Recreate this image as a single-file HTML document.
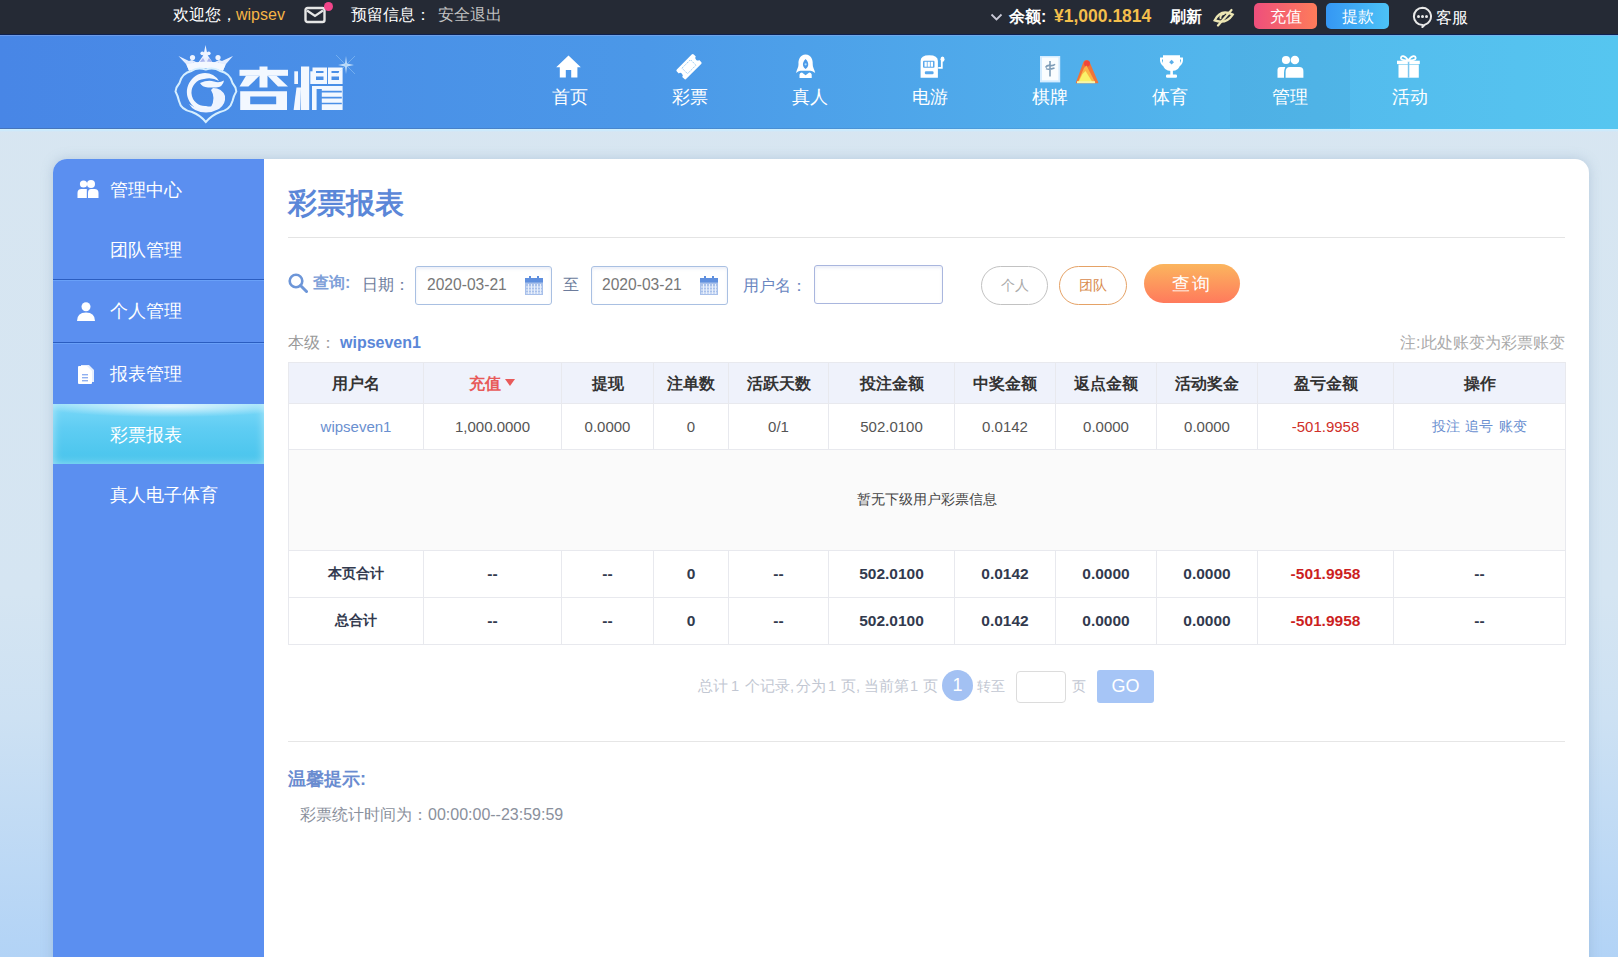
<!DOCTYPE html>
<html><head><meta charset="utf-8">
<style>
*{box-sizing:border-box;margin:0;padding:0}
html,body{width:1618px;height:957px;overflow:hidden}
body{font-family:"Liberation Sans",sans-serif;position:relative;background:linear-gradient(180deg,#d8e6f1 0%,#d5e5f2 62%,#cde1f3 75%,#b2d3f6 100%);color:#333}
.a{position:absolute;white-space:nowrap}
#top{position:absolute;left:0;top:0;width:1618px;height:34px;background:#252a35}
#nav{position:absolute;left:0;top:34px;width:1618px;height:95px;background:linear-gradient(90deg,rgba(70,110,170,.75) 0%,rgba(70,120,180,.45) 45%,rgba(90,180,230,.0) 85%) left bottom/100% 1px no-repeat,linear-gradient(90deg,#4886e6 0%,#4b98e8 40%,#52b6ec 75%,#56c6f0 100%);border-top:1px solid #0c2152}
#nav:before{content:"";position:absolute;left:0;top:0;width:100%;height:1px;background:rgba(140,170,230,.55)}
#nav:after{content:"";position:absolute;left:0;top:94px;width:100%;height:3px;background:linear-gradient(180deg,#cdf0fd,#cdeafc 50%,rgba(214,230,242,0))}
.t16{font-size:16px;line-height:20px}
.pg{top:678px;font-size:14.6px;line-height:17px;color:#c2c7d2}
.navi{position:absolute;top:0;width:120px;height:93px;color:#fff;text-align:center}
.navi svg{position:absolute;left:48px;top:20px;width:24px;height:24px}
.navi .tx{position:absolute;left:0;width:120px;top:51px;font-size:18px;line-height:22px}
#panel{position:absolute;left:53px;top:159px;width:1536px;height:820px;background:#fff;border-radius:14px;box-shadow:0 0 12px rgba(120,150,180,.35);overflow:hidden}
#side{position:absolute;left:0;top:0;width:211px;height:820px;background:#5b8ff0}
.si{position:absolute;left:0;width:211px;height:60px;color:#fff;font-size:18px;line-height:60px}
.si span{position:absolute;left:57px;top:1px}
.si svg{position:absolute}
.sep{position:absolute;left:0;width:211px;height:1px;background:#2b5dc0;box-shadow:0 1px 0 #69a0f8;z-index:1}
.inp{position:absolute;border:1px solid #a9c0e2;border-radius:3px;background:#fff;box-shadow:inset 0 2px 3px rgba(100,120,200,.12)}
table{position:absolute;left:288px;top:362px;border-collapse:collapse;table-layout:fixed;width:1277px}
td,th{border:1px solid #e8e9ee;text-align:center;font-size:15px;color:#555;white-space:nowrap}
th{height:41px;background:#eff2fb;font-size:16px;color:#333;font-weight:bold;padding-top:3px}
.dr td{height:46px}
.er td{height:101px;background:#fafafa;color:#444;font-size:14px}
.tr td{height:47px;font-size:15.5px;font-weight:bold;color:#323a4e}
</style></head>
<body>
<div id="top">
  <div class="a t16" style="left:173px;top:5px;color:#fff">欢迎您，</div><div class="a t16" style="left:236px;top:5px;color:#f6b545">wipsev</div>
  <svg class="a" style="left:304px;top:6px" width="24" height="18" viewBox="0 0 24 18"><rect x="1.5" y="2" width="19" height="14" rx="2" fill="none" stroke="#e6e6e6" stroke-width="2.4"/><path d="M3 4.5 L11 10 L19 4.5" fill="none" stroke="#e6e6e6" stroke-width="2.2"/></svg>
  <div class="a" style="left:324px;top:2px;width:9px;height:9px;border-radius:50%;background:#f2458a"></div>
  <div class="a t16" style="left:351px;top:5px;color:#fff">预留信息：</div>
  <div class="a t16" style="left:438px;top:5px;color:#c3c3c3">安全退出</div>

  <svg class="a" style="left:990px;top:13px" width="13" height="9" viewBox="0 0 13 9"><path d="M1.5 1.5 L6.5 6.5 L11.5 1.5" fill="none" stroke="#c9c9d6" stroke-width="1.8"/></svg>
  <div class="a t16" style="left:1009px;top:7px;color:#fff;font-weight:bold">余额:</div>
  <div class="a" style="left:1054px;top:6px;font-size:17.5px;line-height:20px;color:#f4bf4c;font-weight:bold">¥1,000.1814</div>
  <div class="a t16" style="left:1170px;top:7px;color:#fff;font-weight:bold">刷新</div>
  <svg class="a" style="left:1212px;top:7px" width="23" height="20" viewBox="0 0 23 20"><g transform="rotate(-18 11.5 10)"><path d="M2 10.5 Q11.5 1 21 10.5 Q11.5 18 2 10.5Z" fill="none" stroke="#ece6b4" stroke-width="2.3"/><path d="M8.3 11 A3.4 3.4 0 0 1 13.5 7.6" fill="none" stroke="#ece6b4" stroke-width="2"/></g><path d="M6 18.5 L19.5 3" stroke="#ece6b4" stroke-width="2.2" stroke-linecap="round"/></svg>
  <div class="a" style="left:1254px;top:3px;width:63px;height:26px;border-radius:5px;background:linear-gradient(90deg,#ee4f7c,#fe7c5a);color:#fff;font-size:16px;line-height:28px;text-align:center">充值</div>
  <div class="a" style="left:1326px;top:3px;width:63px;height:26px;border-radius:5px;background:linear-gradient(90deg,#3597f4,#4cc2f6);color:#fff;font-size:16px;line-height:28px;text-align:center">提款</div>
  <svg class="a" style="left:1412px;top:6px" width="21" height="22" viewBox="0 0 21 22"><path d="M10.5 1.8 A8.6 8.6 0 1 0 10.5 19 L10.5 21 L13 18.6 A8.6 8.6 0 0 0 10.5 1.8Z" fill="none" stroke="#e8e8e8" stroke-width="2"/><circle cx="6.5" cy="10.4" r="1.5" fill="#e8e8e8"/><circle cx="10.5" cy="10.4" r="1.5" fill="#e8e8e8"/><circle cx="14.5" cy="10.4" r="1.5" fill="#e8e8e8"/></svg>
  <div class="a t16" style="left:1436px;top:8px;color:#fff">客服</div>
</div>

<div id="nav">
  <!-- logo -->
  <svg class="a" style="left:165px;top:5px" width="190" height="88" viewBox="165 40 190 88">
    <defs><linearGradient id="cr" x1="0" y1="0" x2="0" y2="1"><stop offset="0" stop-color="#f4f8ff"/><stop offset="1" stop-color="#dde8ff"/></linearGradient></defs>
    <path d="M178.5 56 L186 64 L189 70.5 Q206 63 223 70.5 L226 64 L233 56 L222 61 L219 60 L213 63 L207.5 55 L205.5 45 L203.5 55 L198 63 L192 60 L189 61 Z" fill="url(#cr)"/>
    <path d="M193 62.5 L198 64.5 L203 58 L206 63 L209 58 L214 64.5 L219 62.5 L219 64.5 Q206 61 193 64.5Z" fill="#9fa9ea" opacity=".85"/>
    <path d="M186.5 64.5 Q206 58.5 225.5 64.5 L223 71 Q206 65 189 71Z" fill="#f4f8ff"/>
    <circle cx="192.5" cy="57.5" r="2.6" fill="#eef4ff"/><circle cx="218" cy="57.5" r="2.6" fill="#eef4ff"/><circle cx="205.5" cy="55" r="2.4" fill="#eef4ff"/><circle cx="202.3" cy="53.3" r="1.9" fill="#eef4ff"/><circle cx="208.7" cy="53.3" r="1.9" fill="#eef4ff"/>
    <path d="M205.8 69.5 Q214 67 220 71 Q230 73 232.5 83 Q236 87 236.3 91.5 Q233.5 96 232.5 101 Q230 110 220 112 Q212 115 205.8 122 Q200 115 192 112 Q181 110 179 101 Q178 96 175.5 91.5 Q176 87 179.5 83 Q182 73 191.5 71 Q197 67 205.8 69.5Z" fill="none" stroke="#d6efff" stroke-width="2"/>
    <path d="M205 73 A19 19 0 1 0 222 102 Q214 108 206 106 A13.5 13.5 0 0 1 204 79 Q212 77 219 81 Q214 73 205 73Z" fill="#f2f7ff"/>
    <path d="M200 83 Q208 79.5 214 81.5 Q219 83.5 224 80.5 Q223 87 216 87.5 L208 87.5 Q202 87 200 83Z" fill="#f2f7ff"/>
    <path d="M213 88 Q222 88 225 96 Q226 104 219 109 Q214 111 211 107 Q216 98 211 90Z" fill="#eef4ff"/>
    <path d="M189 104 Q198 110 206 108.5 Q214 110 222 104 Q218 112.5 206 112.5 Q194 112.5 189 104Z" fill="#eef4ff"/>
    <g fill="#f3f8ff">
    <rect x="239.5" y="69.8" width="48.5" height="6"/>
    <rect x="259.5" y="66.5" width="8" height="21"/>
    <path d="M246 75.8 L259.5 75.8 L248.4 86.5 L239.5 86.5Z"/>
    <path d="M267.6 75.8 L276.5 75.8 L288 86.5 L278 86.5Z"/>
    <path fill-rule="evenodd" d="M240.2 91.3 L287 91.3 L287 110 L240.2 110Z M250.2 96.5 L250.2 104.3 L276.2 104.3 L276.2 96.5Z"/>
    <rect x="301" y="66.5" width="8.2" height="43.5"/>
    <rect x="294.3" y="71.3" width="3.7" height="12.7"/>
    <rect x="310.3" y="71.3" width="3" height="12.7"/>
    <path d="M296.5 87.6 L301 87.6 L300.3 110 L293.6 110Z"/>
    <path fill-rule="evenodd" d="M312.5 67.6 L327 67.6 L327 84 L312.5 84Z M316 71 L316 73 L323.5 73 L323.5 71Z M316 76.5 L316 80 L323.5 80 L323.5 76.5Z"/>
    <path fill-rule="evenodd" d="M328 67.6 L342.6 67.6 L342.6 84 L328 84Z M331.5 71 L331.5 73 L339 73 L339 71Z M331.5 76.5 L331.5 80 L339 80 L339 76.5Z"/>
    <path fill-rule="evenodd" d="M312 86 L342.6 86 L342.6 110 L312 110Z M316.6 89 L316.6 110 L321.8 110 L321.8 89Z M321.8 90.8 L321.8 92.4 L341.8 92.4 L341.8 90.8Z M321.8 96.8 L321.8 98.4 L341.8 98.4 L341.8 96.8Z M321.8 102.7 L321.8 104.3 L341.8 104.3 L341.8 102.7Z"/>
    </g>
    <g opacity=".75"><path d="M346 56 L347 63.5 L354 65 L347 66.5 L346 74 L345 66.5 L338 65 L345 63.5Z" fill="#e6f6ff"/><path d="M336 55 L356 75 M356 55 L336 75" stroke="#bfe6ff" stroke-width=".8" opacity=".6"/></g>
  </svg>

  <div class="navi" style="left:510px">
    <div class="tx">首页</div></div>
  <div class="navi" style="left:630px">
    <div class="tx">彩票</div></div>
  <div class="navi" style="left:750px">
    <div class="tx">真人</div></div>
  <div class="navi" style="left:870px">
    <div class="tx">电游</div></div>
  <div class="navi" style="left:990px">
    <div class="tx">棋牌</div></div>
  <div class="navi" style="left:1110px">
    <div class="tx">体育</div></div>
  <div class="navi" style="left:1230px;background:rgba(20,60,120,.06)">
    <div class="tx">管理</div></div>
  <div class="navi" style="left:1350px">
    <div class="tx">活动</div></div>
</div>

<svg class="a" style="left:0;top:0;pointer-events:none" width="1618" height="130" viewBox="0 0 1618 130">
  <!-- home -->
  <path d="M568.5 55.5 L580.8 67.2 L577.4 67.2 L577.4 77.6 L571.2 77.6 L571.2 70 L565.8 70 L565.8 77.6 L559.8 77.6 L559.8 67.2 L556.2 67.2Z" fill="#fff"/>
  <!-- ticket -->
  <g transform="rotate(-45 689 66.7)"><path d="M677 61.5 Q677 60 678.5 60 L699.5 60 Q701 60 701 61.5 L701 64.3 Q699 64.3 699 66.7 Q699 69.1 701 69.1 L701 71.9 Q701 73.4 699.5 73.4 L678.5 73.4 Q677 73.4 677 71.9 L677 69.1 Q679 69.1 679 66.7 Q679 64.3 677 64.3Z" fill="#fff"/>
  <rect x="683" y="62.8" width="12" height="7.8" fill="none" stroke="#8ec4f0" stroke-width=".9" stroke-dasharray="1.5 1"/></g>
  <!-- zhenren -->
  <path d="M805.6 54.6 C800 54.6 798.2 60 798.5 64 C798.8 67 796.5 70 796 73 C798 71.5 799.5 71 800.5 70.8 L810.5 70.8 C811.5 71 813 71.5 815.2 73 C814.7 70 812.4 67 812.7 64 C813 60 811.2 54.6 805.6 54.6Z" fill="#fff"/>
  <path d="M805.6 59 C803.5 61 802.6 63.5 803 65.2 C803.4 67 804.4 68 805.6 69 C806.8 68 807.8 67 808.2 65.2 C808.6 63.5 807.7 61 805.6 59Z" fill="#4d9ae8"/>
  <circle cx="805.6" cy="64.3" r="1.1" fill="#a8dcff"/>
  <path d="M799.5 78 L799.5 74.5 Q800 72.6 802 72.5 L805.6 75.2 L809.2 72.5 Q811.2 72.6 811.7 74.5 L811.7 78Z" fill="#fff"/>
  <!-- slot -->
  <path d="M920.6 61 Q920.6 55.3 929.2 55.3 Q937.9 55.3 937.9 61 L937.9 77.7 L920.6 77.7Z" fill="#fff"/>
  <rect x="923" y="60.7" width="11.5" height="7.1" rx="1" fill="#5aa8ec"/>
  <rect x="924.5" y="61.8" width="2.3" height="4.9" fill="#fff"/><rect x="927.6" y="61.8" width="2.3" height="4.9" fill="#fff"/><rect x="930.7" y="61.8" width="2.3" height="4.9" fill="#fff"/>
  <rect x="924.8" y="71.3" width="8.8" height="3" rx="1.2" fill="#5aa8ec"/>
  <path d="M938.2 67.8 L941.8 67.8 L941.8 61" fill="none" stroke="#fff" stroke-width="1.8"/>
  <ellipse cx="942.5" cy="59.2" rx="2" ry="2.6" fill="#fff"/>
  <!-- mahjong -->
  <rect x="1040" y="56" width="20.2" height="26.4" fill="#d4ecff"/>
  <rect x="1042" y="57.5" width="16.4" height="22.8" fill="#fafdff"/>
  <path d="M1050 61 L1050 76.5 M1045.6 67.5 Q1047 65 1050 65.5 Q1053.5 66 1055 64.3 M1046 68.6 Q1049 70 1054.5 68" fill="none" stroke="#7f9db8" stroke-width="1.6"/>
  <!-- fire -->
  <path d="M1086.5 60 Q1089 60 1090 63 L1098.3 82.5 Q1098.5 83.2 1097.5 83.2 L1076.6 83.2 Q1075.8 83.2 1076 82.3 L1083 63 Q1084 60 1086.5 60Z" fill="#f07438"/>
  <circle cx="1087" cy="63.5" r="3" fill="#f2463a"/>
  <path d="M1086.5 65.5 L1095.5 83 L1077.5 83 L1084 68Z" fill="#fbb446"/>
  <path d="M1085.5 71 L1093 83 L1078 83 L1082.5 74Z" fill="#faf26a"/>
  <rect x="1077" y="81.2" width="18" height="2" fill="#f8f6a8"/>
  <!-- trophy -->
  <path d="M1163 55.3 L1180 55.3 L1180 63 Q1180 71 1171.5 71 Q1163 71 1163 63Z" fill="#fff"/>
  <path d="M1163.5 58.5 L1161 58.5 Q1160.5 63.5 1164.5 65.5 M1179.5 58.5 L1182 58.5 Q1182.5 63.5 1178.5 65.5" fill="none" stroke="#fff" stroke-width="2"/>
  <rect x="1170.3" y="70" width="2.6" height="5" fill="#fff"/>
  <rect x="1166" y="74.6" width="11" height="3.1" rx="1.2" fill="#fff"/>
  <path d="M1171.6 59.8 L1174 62.2 L1171.6 64.6 L1169.2 62.2Z" fill="#5aaeea"/>
  <!-- manage -->
  <circle cx="1286" cy="60" r="4.1" fill="#fff"/><circle cx="1294.9" cy="60" r="4.3" fill="#fff"/>
  <path d="M1277.5 77.7 L1277.5 70 Q1277.5 67 1280.5 67 L1285.3 67 Q1284 70 1284 73 L1284 77.7Z" fill="#fff"/>
  <path d="M1285.6 77.7 L1285.6 72 Q1285.6 67 1290 67 L1299.4 67 Q1303.4 67 1303.4 71 L1303.4 77.7Z" fill="#fff"/>
  <!-- gift -->
  <rect x="1397" y="60.7" width="22.8" height="3.4" fill="#fff"/>
  <rect x="1398.5" y="64.6" width="20.3" height="13.1" fill="#fff"/>
  <rect x="1407.8" y="60.7" width="1.5" height="17" fill="#7cc6f0"/>
  <path d="M1408.3 60.5 C1405 55 1400.5 55 1401 58.5 C1401.5 60.3 1405 60.5 1408.3 60.5 C1411.6 60.5 1415.1 60.3 1415.6 58.5 C1416.1 55 1411.6 55 1408.3 60.5Z" fill="none" stroke="#fff" stroke-width="1.8"/>
</svg>
<div id="panel">
  <div id="side">
    <div class="si" style="top:0">
      <svg style="left:24px;top:21px" width="22" height="18" viewBox="0 0 22 18"><circle cx="6.5" cy="4" r="3.6" fill="#fff"/><circle cx="14" cy="4" r="4" fill="#fff"/><path d="M0.5 18 L0.5 13 Q0.5 9 4.5 9 L9.8 9 L9.8 18Z" fill="#fff"/><path d="M11 18 L11 13 Q11 9 14 9 L17.5 9 Q21.5 9 21.5 13 L21.5 18Z" fill="#fff"/></svg>
      <span>管理中心</span></div>
    <div class="si" style="top:60px"><span>团队管理</span></div>
    <div class="sep" style="top:120px"></div>
    <div class="si" style="top:121px">
      <svg style="left:23px;top:22px" width="20" height="19" viewBox="0 0 20 19"><circle cx="10" cy="4.8" r="4.5" fill="#fff"/><path d="M1 19 Q1 10.5 10 10.5 Q19 10.5 19 19Z" fill="#fff"/></svg>
      <span>个人管理</span></div>
    <div class="sep" style="top:183px"></div>
    <div class="si" style="top:184px">
      <svg style="left:24px;top:19px" width="18" height="22" viewBox="0 0 18 22"><path d="M4 3 L12 3 L17 8 L17 20 L4 20Z" fill="#fff" opacity=".85"/><path d="M1 5 Q1 4 2 4 L10 4 L15 9 L15 21 Q15 22 14 22 L2 22 Q1 22 1 21Z" fill="#fff"/><rect x="5" y="12" width="6" height="1.4" fill="#8fb0f0"/><rect x="5" y="15" width="6" height="1.4" fill="#8fb0f0"/><rect x="5" y="18" width="6" height="1.4" fill="#8fb0f0"/></svg>
      <span>报表管理</span></div>
    <div class="si" style="top:245px;background:radial-gradient(ellipse 60% 18% at 55% 4%,rgba(255,255,255,.75),rgba(255,255,255,0)),linear-gradient(180deg,#7ad8f8 0%,#5fcdf3 40%,#47c4ec 100%);box-shadow:inset 0 0 10px rgba(255,255,255,.5)"><span>彩票报表</span></div>
    <div class="si" style="top:305px"><span>真人电子体育</span></div>
  </div>
</div>

<!-- content -->
<div class="a" style="left:288px;top:184px;font-size:29px;line-height:38px;font-weight:bold;color:#5b87d8">彩票报表</div>
<div class="a" style="left:288px;top:237px;width:1277px;height:1px;background:#e4e4e4"></div>

<svg class="a" style="left:288px;top:273px" width="20" height="20" viewBox="0 0 20 20"><circle cx="8" cy="8" r="6.3" fill="none" stroke="#6d96d8" stroke-width="2.6"/><path d="M12.5 12.5 L18.5 18.5" stroke="#6d96d8" stroke-width="3" stroke-linecap="round"/></svg>
<div class="a t16" style="left:313px;top:273px;color:#7ea0d8;font-weight:bold">查询:</div>
<div class="a t16" style="left:362px;top:275px;color:#6d7c9c">日期：</div>
<div class="inp" style="left:415px;top:266px;width:137px;height:39px"></div>
<div class="a" style="left:427px;top:276px;font-size:15.6px;line-height:18px;color:#777">2020-03-21</div>
<svg class="a cal" style="left:525px;top:276px" width="18" height="19" viewBox="0 0 18 19"><rect x="0" y="2" width="18" height="17" fill="#a8c0ea"/><rect x="0" y="2" width="18" height="4.5" fill="#5f8fde"/><rect x="4" y="0" width="2" height="4" fill="#5f8fde"/><rect x="12" y="0" width="2" height="4" fill="#5f8fde"/><g fill="#e8effb"><rect x="3" y="8" width="1" height="10"/><rect x="6" y="8" width="1" height="10"/><rect x="9" y="8" width="1" height="10"/><rect x="12" y="8" width="1" height="10"/><rect x="15" y="8" width="1" height="10"/><rect x="1" y="10.5" width="16" height="1"/><rect x="1" y="13.5" width="16" height="1"/><rect x="1" y="16.5" width="16" height="1"/></g></svg>
<div class="a t16" style="left:563px;top:275px;color:#6d7c9c">至</div>
<div class="inp" style="left:591px;top:266px;width:137px;height:39px"></div>
<div class="a" style="left:602px;top:276px;font-size:15.6px;line-height:18px;color:#777">2020-03-21</div>
<svg class="a" style="left:700px;top:276px" width="18" height="19" viewBox="0 0 18 19"><rect x="0" y="2" width="18" height="17" fill="#a8c0ea"/><rect x="0" y="2" width="18" height="4.5" fill="#5f8fde"/><rect x="4" y="0" width="2" height="4" fill="#5f8fde"/><rect x="12" y="0" width="2" height="4" fill="#5f8fde"/><g fill="#e8effb"><rect x="3" y="8" width="1" height="10"/><rect x="6" y="8" width="1" height="10"/><rect x="9" y="8" width="1" height="10"/><rect x="12" y="8" width="1" height="10"/><rect x="15" y="8" width="1" height="10"/><rect x="1" y="10.5" width="16" height="1"/><rect x="1" y="13.5" width="16" height="1"/><rect x="1" y="16.5" width="16" height="1"/></g></svg>
<div class="a t16" style="left:743px;top:276px;color:#6a86c0">用户名：</div>
<div class="inp" style="left:814px;top:265px;width:129px;height:39px;border-color:#a9b6de"></div>
<div class="a" style="left:981px;top:266px;width:67px;height:39px;border:1px solid #c2c2c2;border-radius:20px;color:#aaa;font-size:14px;line-height:37px;text-align:center">个人</div>
<div class="a" style="left:1059px;top:266px;width:68px;height:39px;border:1px solid #e5a266;border-radius:20px;color:#d88a4c;font-size:14px;line-height:37px;text-align:center">团队</div>
<div class="a" style="left:1144px;top:264px;width:96px;height:39px;border-radius:20px;background:linear-gradient(180deg,#fbb55e,#ff7a5c);color:#fff;font-size:18px;line-height:41px;text-align:center;letter-spacing:2px">查询</div>

<div class="a t16" style="left:288px;top:333px;color:#999">本级：</div>
<div class="a t16" style="left:340px;top:333px;color:#5b87d8;font-weight:bold">wipseven1</div>
<div class="a t16" style="left:1400px;top:333px;color:#aaa">注: </div><div class="a t16" style="left:1421px;top:333px;width:144px;text-align:right;color:#aaa">此处账变为彩票账变</div>

<table>
<colgroup><col style="width:135px"><col style="width:138px"><col style="width:92px"><col style="width:75px"><col style="width:100px"><col style="width:126px"><col style="width:101px"><col style="width:101px"><col style="width:101px"><col style="width:136px"><col style="width:172px"></colgroup>
<tr><th>用户名</th><th style="color:#e85a5a">充值<svg width="12" height="9" viewBox="0 0 12 9" style="margin-left:3px;vertical-align:2px"><path d="M1 1 L11 1 L6 8Z" fill="#e85a5a"/></svg></th><th>提现</th><th>注单数</th><th>活跃天数</th><th>投注金额</th><th>中奖金额</th><th>返点金额</th><th>活动奖金</th><th>盈亏金额</th><th>操作</th></tr>
<tr class="dr"><td style="color:#6a8fd0">wipseven1</td><td>1,000.0000</td><td>0.0000</td><td>0</td><td>0/1</td><td>502.0100</td><td>0.0142</td><td>0.0000</td><td>0.0000</td><td style="color:#d0302a">-501.9958</td><td style="color:#6a8fd0;font-size:14px;word-spacing:1.5px">投注 追号 账变</td></tr>
<tr class="er"><td colspan="11">暂无下级用户彩票信息</td></tr>
<tr class="tr"><td style="font-size:14px">本页合计</td><td>--</td><td>--</td><td>0</td><td>--</td><td>502.0100</td><td>0.0142</td><td>0.0000</td><td>0.0000</td><td style="color:#cc1f1f">-501.9958</td><td>--</td></tr>
<tr class="tr"><td style="font-size:14px">总合计</td><td>--</td><td>--</td><td>0</td><td>--</td><td>502.0100</td><td>0.0142</td><td>0.0000</td><td>0.0000</td><td style="color:#cc1f1f">-501.9958</td><td>--</td></tr>
</table>

<div class="a pg" style="left:698px">总计</div><div class="a pg" style="left:731px">1</div><div class="a pg" style="left:745px">个记录,</div><div class="a pg" style="left:796px">分为</div><div class="a pg" style="left:828px">1</div><div class="a pg" style="left:841px">页,</div><div class="a pg" style="left:864px">当前第</div><div class="a pg" style="left:910px">1</div><div class="a pg" style="left:923px">页</div>
<div class="a" style="left:942px;top:670px;width:31px;height:31px;border-radius:50%;background:#a3c1f3;color:#fff;font-size:18px;line-height:31px;text-align:center">1</div>
<div class="a" style="left:977px;top:678px;font-size:14px;line-height:17px;color:#c2c7d2">转至</div>
<div class="a" style="left:1016px;top:671px;width:50px;height:32px;border:1px solid #dcdcdc;border-radius:4px;background:#fff"></div>
<div class="a" style="left:1072px;top:678px;font-size:14px;line-height:17px;color:#c2c7d2">页</div>
<div class="a" style="left:1097px;top:670px;width:57px;height:33px;border-radius:3px;background:#a6c5f6;color:#fff;font-size:18px;line-height:33px;text-align:center">GO</div>

<div class="a" style="left:288px;top:741px;width:1277px;height:1px;background:#e6e6e6"></div>
<div class="a" style="left:288px;top:768px;font-size:18px;line-height:22px;font-weight:bold;color:#6a8cd0">温馨提示:</div>
<div class="a t16" style="left:300px;top:805px;color:#8a909c">彩票统计时间为：</div><div class="a t16" style="left:428px;top:805px;color:#8a909c">00:00:00--23:59:59</div>
</body></html>
